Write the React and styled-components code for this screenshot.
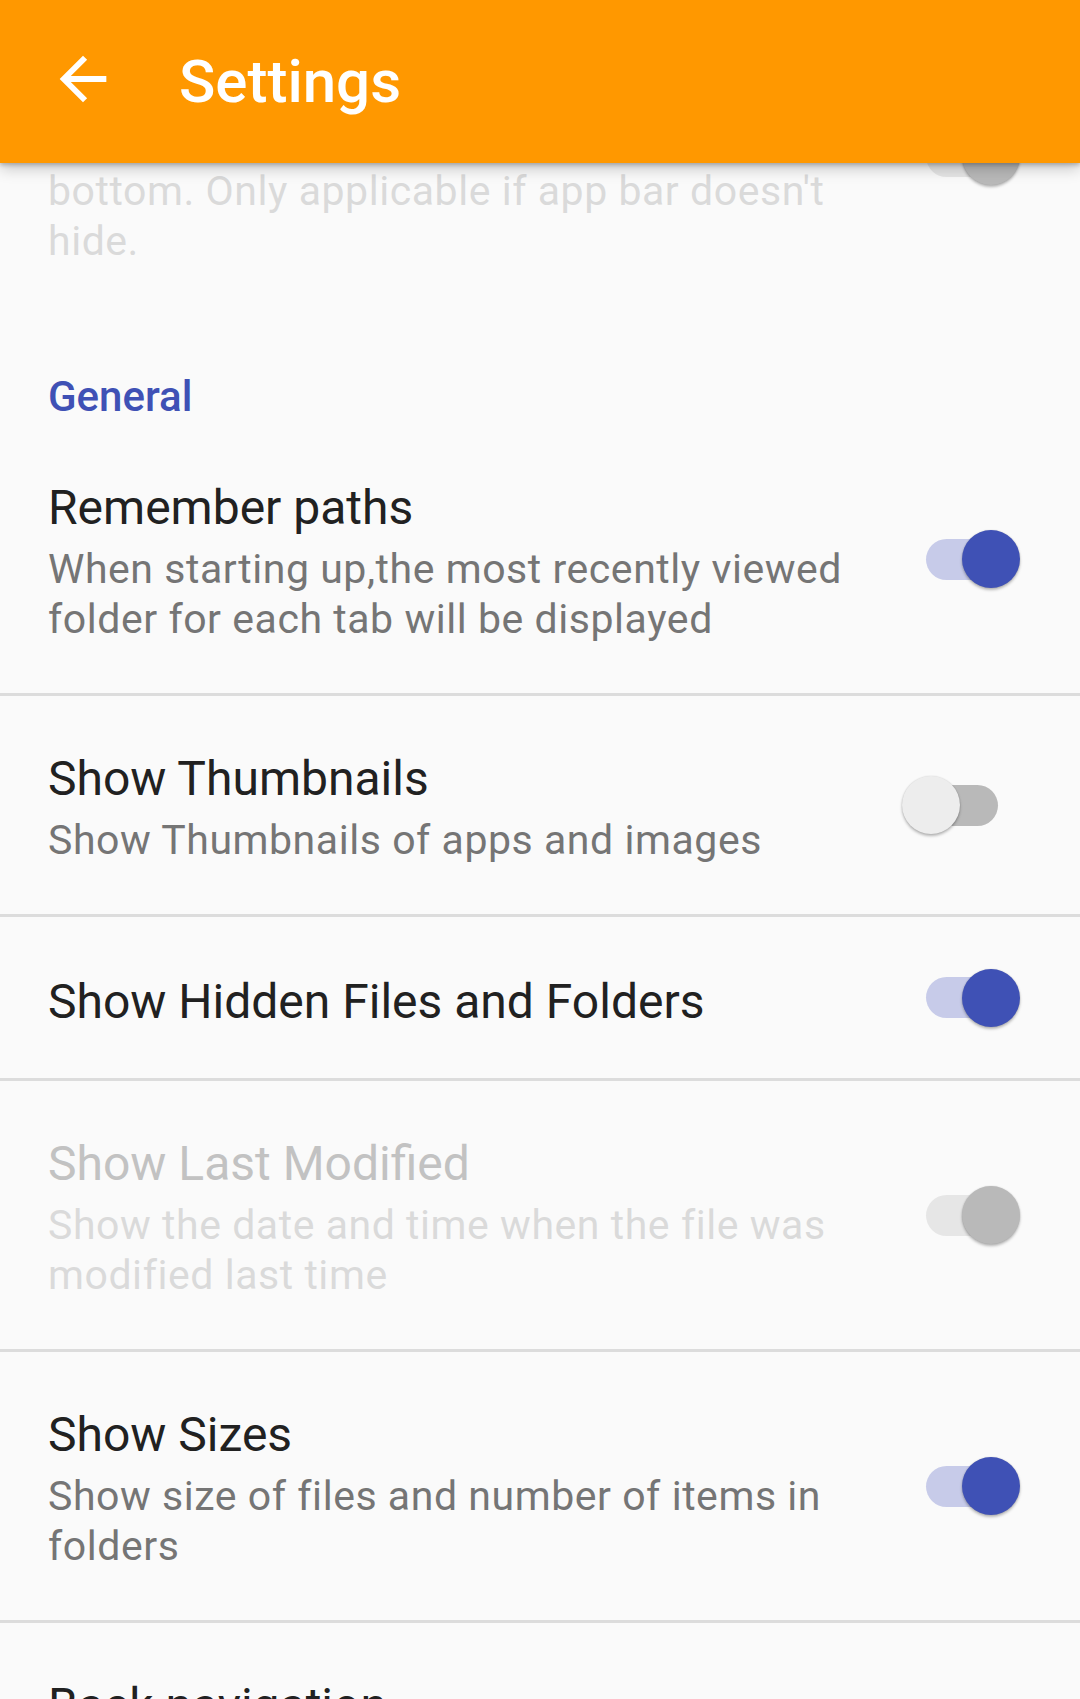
import React from "react";
import styled, { createGlobalStyle } from "styled-components";

const Global = createGlobalStyle`
  html, body { margin: 0; padding: 0; background: #fafafa; }
  body { font-family: Roboto, "Noto Sans", "Liberation Sans", sans-serif; -webkit-font-smoothing: antialiased; }
  * { box-sizing: border-box; }
`;

const Screen = styled.div`
  position: relative;
  width: 1080px;
  height: 1699px;
  overflow: hidden;
  background: #fafafa;
`;

const AppBar = styled.header`
  position: absolute;
  top: 0;
  left: 0;
  right: 0;
  z-index: 2;
  height: 163px;
  display: flex;
  align-items: center;
  padding-left: 48px;
  background: #ff9800;
  box-shadow: 0 2px 4px rgba(0, 0, 0, 0.22), 0 6px 14px rgba(0, 0, 0, 0.2);
`;

const BackButton = styled.button`
  width: 70px;
  height: 70px;
  padding: 0;
  margin: 0 0 5px 0;
  border: none;
  background: none;
  display: flex;
  color: #fff;
  svg { width: 70px; height: 70px; display: block; }
`;

const Title = styled.h1`
  margin: 0 0 0 61px;
  font-size: 60px;
  font-weight: 500;
  line-height: normal;
  color: #fff;
`;

const List = styled.main`
  margin-top: -3px;
  display: flex;
  flex-direction: column;
`;

const Category = styled.div`
  padding: 57px 48px 4px;
  font-size: 42px;
  font-weight: 500;
  line-height: 49px;
  color: #3f51b5;
`;

const Row = styled.div`
  display: flex;
  align-items: center;
  padding: 0 58px 0 48px;
  border-bottom: ${(p) => (p.$divider ? "3px solid #dcdcdc" : "none")};
`;

const TextCol = styled.div`
  flex: 1;
  min-width: 0;
  padding: ${(p) => (p.$titleOnly ? "57px 0 49px" : "55px 0 49px")};
`;

const PrefTitle = styled.div`
  font-size: 48px;
  line-height: 55px;
  color: ${(p) => (p.$disabled ? "#c2c2c2" : "#212121")};
`;

const Summary = styled.div`
  margin-top: 9px;
  font-size: 41px;
  letter-spacing: 0.55px;
  line-height: 50px;
  color: ${(p) => (p.$disabled ? "#dadada" : "#757575")};
`;

const SwitchBox = styled.div`
  position: relative;
  flex: none;
  width: 120px;
  height: 60px;
`;

const Track = styled.div`
  position: absolute;
  left: 24px;
  top: 9.5px;
  width: 72px;
  height: 41px;
  border-radius: 21px;
  background: ${(p) =>
    p.$disabled ? "#e6e6e6" : p.$on ? "#c7cbe9" : "#b9b9b9"};
`;

const Thumb = styled.div`
  position: absolute;
  top: 1px;
  left: ${(p) => (p.$on ? "60px" : "0")};
  width: 58px;
  height: 58px;
  border-radius: 50%;
  background: ${(p) =>
    p.$disabled ? "#b9b9b9" : p.$on ? "#3f51b5" : "#ededed"};
  box-shadow: 0 2px 3px rgba(0, 0, 0, 0.28), 0 0 1.5px rgba(0, 0, 0, 0.14);
`;

function Switch({ on, disabled }) {
  return (
    <SwitchBox role="switch" aria-checked={on} aria-disabled={disabled}>
      <Track $on={on} $disabled={disabled} />
      <Thumb $on={on} $disabled={disabled} />
    </SwitchBox>
  );
}

function Pref({ title, summary, on, disabled, divider = true, hasSwitch = true }) {
  return (
    <Row $divider={divider}>
      <TextCol $titleOnly={!summary}>
        <PrefTitle $disabled={disabled}>{title}</PrefTitle>
        {summary && <Summary $disabled={disabled}>{summary}</Summary>}
      </TextCol>
      {hasSwitch && <Switch on={on} disabled={disabled} />}
    </Row>
  );
}

const ArrowBack = () => (
  <svg viewBox="0 0 24 24" fill="currentColor" aria-hidden="true">
    <path d="M20 11H7.83l5.59-5.59L12 4l-8 8 8 8 1.41-1.41L7.83 13H20v-2z" />
  </svg>
);

export default function App() {
  return (
    <>
      <Global />
      <Screen>
        <AppBar>
          <BackButton aria-label="Back">
            <ArrowBack />
          </BackButton>
          <Title>Settings</Title>
        </AppBar>
        <List>
          <Pref
            title="Path bar at bottom"
            summary={
              <>
                Show the path bar and the tabs at the
                <br />
                bottom. Only applicable if app bar doesn't
                <br />
                hide.
              </>
            }
            on
            disabled
            divider={false}
          />
          <Category>General</Category>
          <Pref
            title="Remember paths"
            summary="When starting up,the most recently viewed folder for each tab will be displayed"
            on
          />
          <Pref
            title="Show Thumbnails"
            summary="Show Thumbnails of apps and images"
            on={false}
          />
          <Pref title="Show Hidden Files and Folders" on />
          <Pref
            title="Show Last Modified"
            summary="Show the date and time when the file was modified last time"
            on
            disabled
          />
          <Pref
            title="Show Sizes"
            summary="Show size of files and number of items in folders"
            on
          />
          <Pref
            title="Back navigation"
            summary="Go back to the parent folder instead of closing the app"
            hasSwitch={false}
            divider={false}
          />
        </List>
      </Screen>
    </>
  );
}
